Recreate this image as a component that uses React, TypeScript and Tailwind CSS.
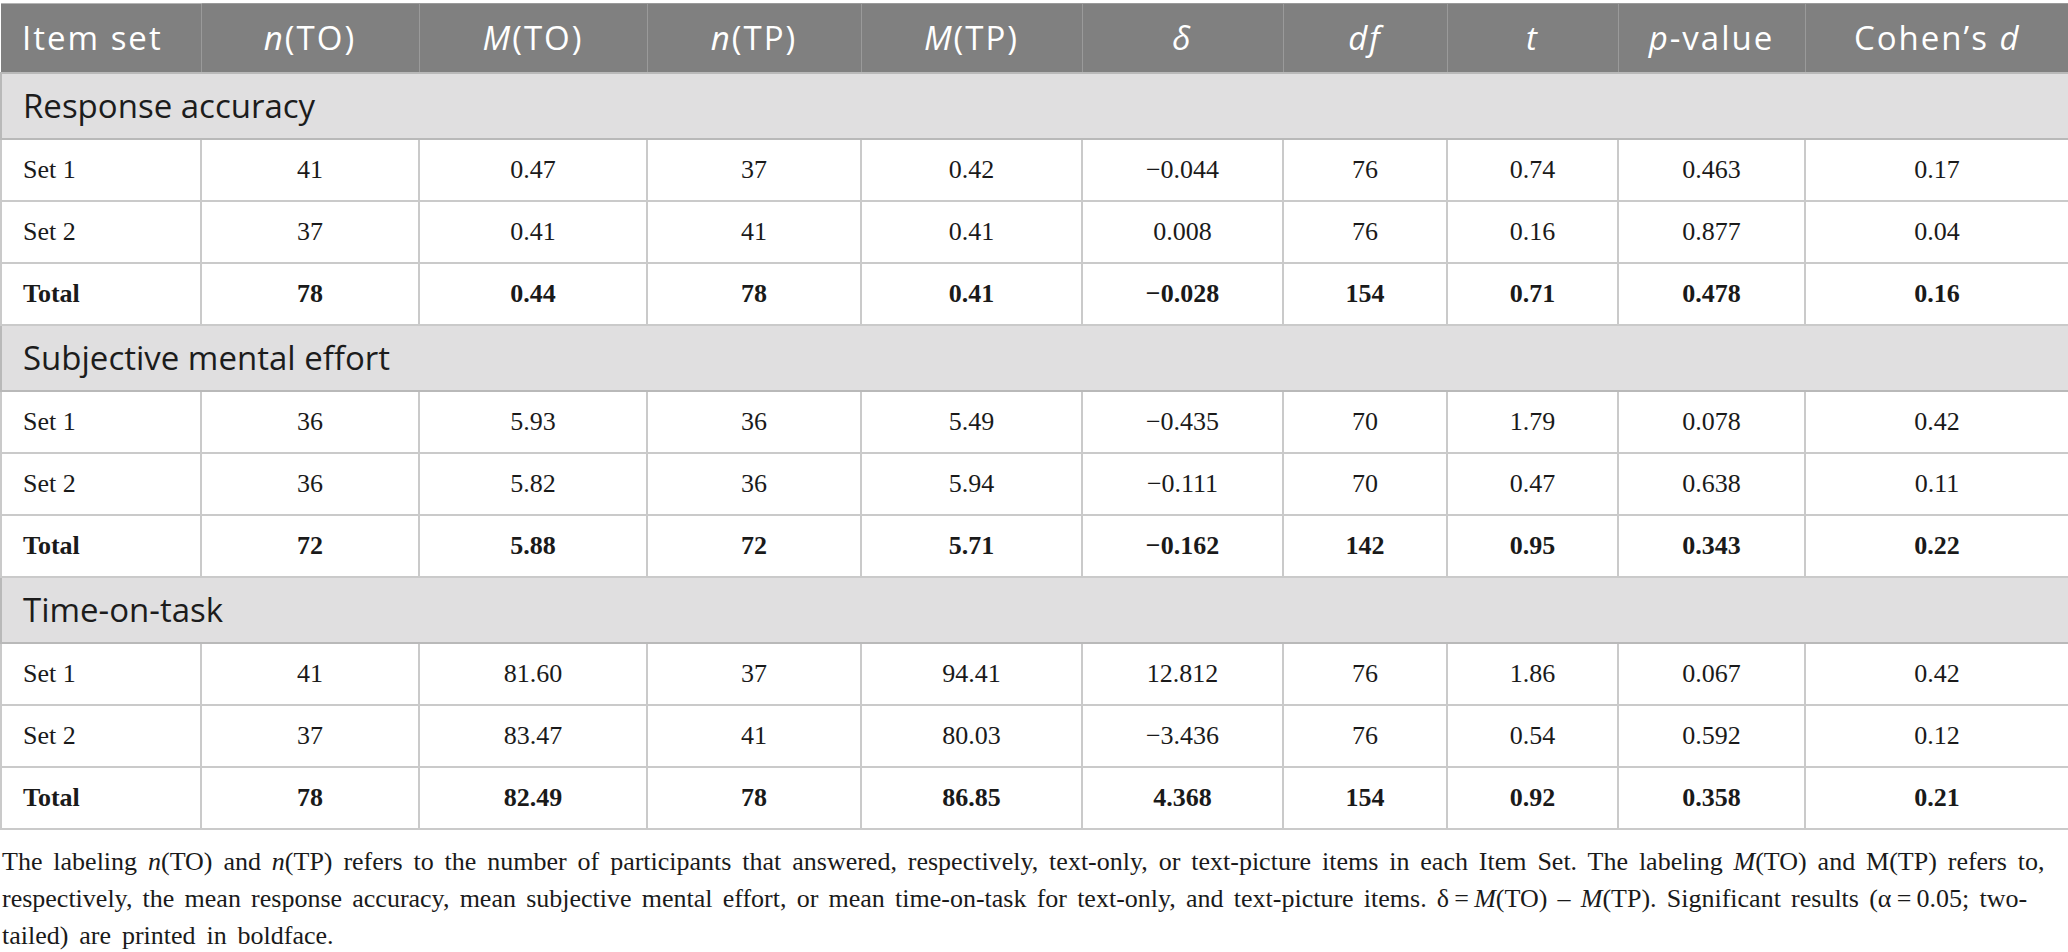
import React from 'react';

type Row = { label: string; v: string[]; bold?: boolean };
type Section = { title: string; rows: Row[] };

const colWidths = [200, 218, 228, 214, 221, 201, 164, 171, 187, 264];

const sections: Section[] = [
  {
    title: 'Response accuracy',
    rows: [
      { label: 'Set 1', v: ['41', '0.47', '37', '0.42', '−0.044', '76', '0.74', '0.463', '0.17'] },
      { label: 'Set 2', v: ['37', '0.41', '41', '0.41', '0.008', '76', '0.16', '0.877', '0.04'] },
      { label: 'Total', v: ['78', '0.44', '78', '0.41', '−0.028', '154', '0.71', '0.478', '0.16'], bold: true },
    ],
  },
  {
    title: 'Subjective mental effort',
    rows: [
      { label: 'Set 1', v: ['36', '5.93', '36', '5.49', '−0.435', '70', '1.79', '0.078', '0.42'] },
      { label: 'Set 2', v: ['36', '5.82', '36', '5.94', '−0.111', '70', '0.47', '0.638', '0.11'] },
      { label: 'Total', v: ['72', '5.88', '72', '5.71', '−0.162', '142', '0.95', '0.343', '0.22'], bold: true },
    ],
  },
  {
    title: 'Time-on-task',
    rows: [
      { label: 'Set 1', v: ['41', '81.60', '37', '94.41', '12.812', '76', '1.86', '0.067', '0.42'] },
      { label: 'Set 2', v: ['37', '83.47', '41', '80.03', '−3.436', '76', '0.54', '0.592', '0.12'] },
      { label: 'Total', v: ['78', '82.49', '78', '86.85', '4.368', '154', '0.92', '0.358', '0.21'], bold: true },
    ],
  },
];

const sans = "font-['Open_Sans',sans-serif]";
const serif = "font-['Liberation_Serif',serif]";

const App = () => {
  return (
    <div className="w-[2068px] bg-white pt-[3px] text-[#1a1a1a]">
      <table className="w-[2068px] table-fixed border-collapse">
        <colgroup>
          {colWidths.map((w, i) => (
            <col key={i} style={{ width: w }} />
          ))}
        </colgroup>
        <thead>
          <tr className={`h-[69px] bg-[#808080] text-white text-[33px] tracking-[2px] ${sans}`}>
            <th className="border-t border-[#b4b4b4] pl-[21px] text-left font-normal">Item set</th>
            <th className="border-t border-l border-[#9a9a9a] font-normal">
              <i>n</i>(TO)
            </th>
            <th className="border-t border-l border-[#9a9a9a] font-normal">
              <i>M</i>(TO)
            </th>
            <th className="border-t border-l border-[#9a9a9a] font-normal">
              <i>n</i>(TP)
            </th>
            <th className="border-t border-l border-[#9a9a9a] font-normal">
              <i>M</i>(TP)
            </th>
            <th className="border-t border-l border-[#9a9a9a] font-normal">
              <i>δ</i>
            </th>
            <th className="border-t border-l border-[#9a9a9a] font-normal">
              <i>df</i>
            </th>
            <th className="border-t border-l border-[#9a9a9a] font-normal">
              <i>t</i>
            </th>
            <th className="border-t border-l border-[#9a9a9a] font-normal">
              <i>p</i>-value
            </th>
            <th className="border-t border-l border-[#9a9a9a] font-normal">
              Cohen’s <i>d</i>
            </th>
          </tr>
        </thead>
        <tbody>
          {sections.map((s) => (
            <React.Fragment key={s.title}>
              <tr className="h-[66px] bg-[#e0dfe0]">
                <td
                  colSpan={10}
                  className={`border-2 border-[#b9b9b9] pl-[21px] text-[33px] text-[#1c1c1c] ${sans}`}
                >
                  {s.title}
                </td>
              </tr>
              {s.rows.map((r) => (
                <tr
                  key={r.label}
                  className={`h-[62px] text-[26px] ${serif} ${r.bold ? 'font-bold' : ''}`}
                >
                  <td className="border-2 border-[#cacaca] pl-[21px] text-left">{r.label}</td>
                  {r.v.map((x, i) => (
                    <td key={i} className="border-2 border-[#cacaca] text-center">
                      {x}
                    </td>
                  ))}
                </tr>
              ))}
            </React.Fragment>
          ))}
        </tbody>
      </table>
      <p className={`mt-[13px] pl-[2px] text-[26px] leading-[37px] text-[#1a1a1a] ${serif}`}>
        <span className="block whitespace-nowrap [word-spacing:4.4px]">
          The labeling <i>n</i>(TO) and <i>n</i>(TP) refers to the number of participants that answered, respectively,
          text-only, or text-picture items in each Item Set. The labeling <i>M</i>(TO) and M(TP) refers to,
        </span>
        <span className="block whitespace-nowrap [word-spacing:3.7px]">
          respectively, the mean response accuracy, mean subjective mental effort, or mean time-on-task for text-only,
          and text-picture items. δ{'\u2009=\u2009'}<i>M</i>(TO) – <i>M</i>(TP). Significant results (α{'\u2009=\u2009'}0.05;
          two-
        </span>
        <span className="block whitespace-nowrap [word-spacing:4.4px]">tailed) are printed in boldface.</span>
      </p>
    </div>
  );
};

export default App;
